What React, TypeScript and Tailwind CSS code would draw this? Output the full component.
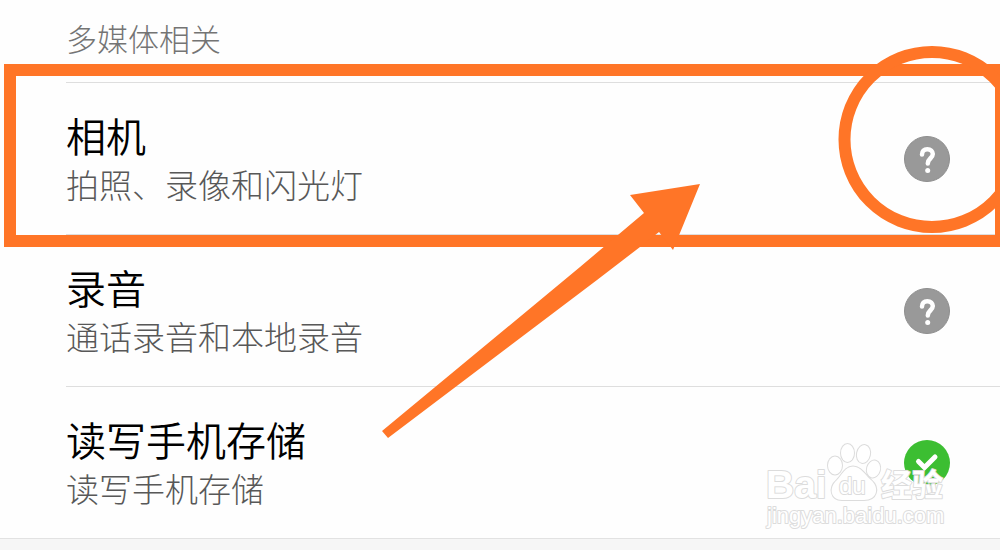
type Status = "ask" | "allowed";

type Permission = { name: string; detail: string; status: Status };

const permissions: Permission[] = [
  { name: "相机", detail: "拍照、录像和闪光灯", status: "ask" },
  { name: "录音", detail: "通话录音和本地录音", status: "ask" },
  { name: "读写手机存储", detail: "读写手机存储", status: "allowed" },
];

function StatusIcon({ status }: { status: Status }) {
  if (status === "allowed") {
    return (
      <svg viewBox="0 0 46 46" className="size-full" aria-hidden="true">
        <circle cx="23" cy="23" r="23" fill="#3cbe32" />
        <path d="M14.500 21.500 L20.500 27.500 L31 17" fill="none" stroke="#fff" strokeWidth="5" strokeLinecap="round" />
      </svg>
    );
  }
  return (
    <svg viewBox="0 0 46 46" className="size-full" aria-hidden="true">
      <circle cx="23" cy="23" r="22.500" fill="#999" stroke="#8e8e8e" />
      <path
        d="M18 18.500 C18 15 20 13.200 23.300 13.200 C26.700 13.200 28.800 15.300 28.800 18.100 C28.800 22.300 23.800 22.300 23.800 27.500"
        fill="none"
        stroke="#fff"
        strokeWidth="4.500"
        strokeLinecap="round"
      />
      <circle cx="23.700" cy="34.500" r="2.500" fill="#fff" />
    </svg>
  );
}

function PermissionRow({ name, detail, status }: Permission) {
  return (
    <li className="flex items-center justify-between border-t border-[#dedede] py-[26px] pr-[50px]">
      <div>
        <h2 className="text-[40px] leading-[52px] font-[350] text-black">{name}</h2>
        <p className="text-[33px] leading-[47px] text-[#585858]">{detail}</p>
      </div>
      <button type="button" aria-label={name} className="size-[46px] shrink-0 rounded-full">
        <StatusIcon status={status} />
      </button>
    </li>
  );
}

function Annotations() {
  return (
    <svg
      width="1000"
      height="550"
      viewBox="0 0 1000 550"
      className="pointer-events-none absolute top-0 right-0"
      aria-hidden="true"
    >
      <g fill="none" stroke="#ff7527" strokeWidth="12">
        <rect x="10" y="70" width="991" height="171" />
        <circle cx="932" cy="139.500" r="87.500" />
      </g>
      <path d="M700 184 L630 195 L644 213 L580 267 L382 431 L388 438 L597 280 L640 247 L659 232 L673 250 Z" fill="#ff7527" />
    </svg>
  );
}

function Watermark() {
  return (
    <svg
      width="190"
      height="95"
      viewBox="760 437 190 95"
      className="pointer-events-none absolute top-[437px] right-[50px]"
      fill="#fff"
      stroke="#dcdcdc"
      strokeWidth="2"
      strokeLinejoin="round"
      paintOrder="stroke"
    >
      <ellipse cx="835" cy="465.500" rx="7" ry="9" />
      <ellipse cx="847.500" cy="453" rx="6.500" ry="9" />
      <ellipse cx="863.500" cy="454" rx="6.500" ry="9" transform="rotate(12 863.500 454)" />
      <ellipse cx="873.500" cy="469" rx="6.500" ry="8.500" transform="rotate(15 873.500 469)" />
      <path d="M853 466.500 C845 466.500 842 475 837 480 C828 488 831 500 842 500 C849 500 858 500 864 500 C877 500 880 488 871 480 C865 475 861 466.500 853 466.500 Z" />
      <text x="766" y="498" fontSize="39" fontWeight="700" fontFamily="Liberation Sans, sans-serif">Bai</text>
      <text x="839" y="494" fontSize="24" fontFamily="Liberation Sans, sans-serif">du</text>
      <text x="881" y="496" fontSize="31" fontWeight="700" fontFamily="Noto Sans CJK SC, sans-serif">经验</text>
      <text x="767" y="523" fontSize="22" fontFamily="Liberation Sans, sans-serif">jingyan.baidu.com</text>
    </svg>
  );
}

export default function App() {
  return (
    <div lang="zh-CN" className="relative min-h-screen overflow-hidden bg-[#f6f6f6] font-['Noto_Sans_CJK_SC',sans-serif] font-light">
      <main className="border-b border-[#e2e2e2] bg-[#fefefe] pl-[66px]">
        <h1 className="pt-3.5 pb-5 text-[31px] leading-[48px] text-[#747474]">多媒体相关</h1>
        <ul>
          {permissions.map((permission) => (
            <PermissionRow key={permission.name} {...permission} />
          ))}
        </ul>
      </main>
      <Annotations />
      <Watermark />
    </div>
  );
}
